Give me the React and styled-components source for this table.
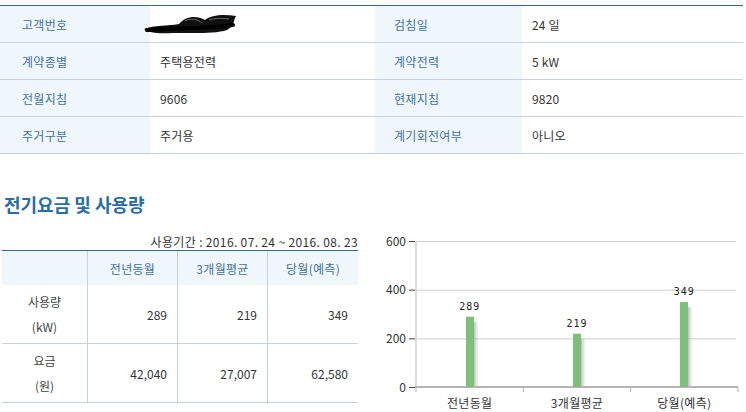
import React from "react";
import styled, { createGlobalStyle } from "styled-components";

const GlobalStyle = createGlobalStyle`
  html, body { margin: 0; padding: 0; background: #ffffff; }
  body { font-family: "Noto Sans CJK KR", "Noto Sans", sans-serif; color: #333; }
`;

const Page = styled.div`
  width: 746px;
  height: 412px;
  overflow: hidden;
  padding-top: 5px;
  box-sizing: border-box;
`;

const InfoGrid = styled.div`
  display: grid;
  grid-template-columns: 150px 225px 147px 221px;
  width: 743px;
  border-top: 1px solid #3b6b7c;
`;

const InfoLabel = styled.div`
  height: 36px;
  display: flex;
  align-items: center;
  padding-left: ${(p) => (p.$first ? "22px" : "19px")};
  background: #f0f7fc;
  color: #41729f;
  font-size: 12px;
  letter-spacing: 0.3px;
  border-bottom: 1px solid #c6d1d9;
`;

const InfoValue = styled.div`
  height: 36px;
  display: flex;
  align-items: center;
  padding-left: 10px;
  color: #333;
  font-size: 12px;
  letter-spacing: 0.2px;
  border-bottom: 1px solid #c6d1d9;
`;

const Heading = styled.h2`
  margin: 39px 0 0 4px;
  height: 22px;
  line-height: 22px;
  font-size: 18px;
  font-weight: 700;
  color: #2a6ca3;
`;

const Section = styled.div`
  display: flex;
  align-items: flex-start;
  margin-top: 19px;
  padding-left: 2px;
`;

const UsageColumn = styled.div`
  width: 356px;
  display: flex;
  flex-direction: column;
`;

const Period = styled.div`
  height: 16px;
  line-height: 16px;
  font-size: 12px;
  letter-spacing: 0.35px;
  text-align: right;
  color: #333;
`;

const UsageGrid = styled.div`
  display: grid;
  grid-template-columns: 86px 90px 90px 90px;
  border-top: 1px solid #3b6b7c;
`;

const HeadCell = styled.div`
  height: 34px;
  box-sizing: border-box;
  display: flex;
  align-items: center;
  justify-content: center;
  background: #f0f7fc;
  color: #41729f;
  font-size: 12px;
  letter-spacing: 0.3px;
  border-right: ${(p) => (p.$last ? "none" : "1px solid #c6d1d9")};
`;

const RowHead = styled.div`
  height: 59px;
  box-sizing: border-box;
  display: flex;
  flex-direction: column;
  align-items: center;
  justify-content: center;
  font-size: 12px;
  line-height: 25px;
  color: #444;
  border-right: 1px solid #c6d1d9;
  border-bottom: 1px solid #c6d1d9;
`;

const NumCell = styled.div`
  height: 59px;
  box-sizing: border-box;
  display: flex;
  align-items: center;
  justify-content: flex-end;
  padding-right: 10px;
  font-size: 12px;
  color: #333;
  border-right: ${(p) => (p.$last ? "none" : "1px solid #c6d1d9")};
  border-bottom: 1px solid #c6d1d9;
`;

const ChartBox = styled.div`
  margin-left: 15px;
  margin-top: -8px;
  width: 373px;
  height: 186px;
`;

const Scribble = () => (
  <svg width="96" height="22" viewBox="0 0 96 22" style={{ marginLeft: -17 }}>
    <path
      d="M1 16 C 12 12, 24 13, 36 11 C 42 3, 54 2, 62 7 C 68 2, 80 1, 93 3 C 90 8, 92 12, 84 17 C 72 21, 50 20, 30 20 C 16 21, 6 20, 1 16 Z"
      fill="#111"
    />
    <path d="M4 17 C 30 15, 60 16, 90 12" stroke="#000" strokeWidth="4" fill="none" strokeLinecap="round" />
    <path d="M42 8 C 48 5, 55 6, 59 10" stroke="#fff" strokeWidth="1" fill="none" opacity="0.35" />
    <path d="M66 7 C 72 5, 79 5, 86 6" stroke="#fff" strokeWidth="1" fill="none" opacity="0.35" />
  </svg>
);

const info = [
  ["고객번호", null, "검침일", "24 일"],
  ["계약종별", "주택용전력", "계약전력", "5 kW"],
  ["전월지침", "9606", "현재지침", "9820"],
  ["주거구분", "주거용", "계기회전여부", "아니오"],
];

const cats = ["전년동월", "3개월평균", "당월(예측)"];
const usage = [289, 219, 349];
const fees = ["42,040", "27,007", "62,580"];

const Chart = () => {
  const off = 8;
  const left = 43;
  const right = 365;
  const top = 7 + off;
  const bottom = 153 + off;
  const scale = (bottom - top) / 600;
  const y = (v) => bottom - v * scale;
  const catW = (right - left) / 3;
  return (
    <svg width="373" height="186" viewBox="0 0 373 186">
      <defs>
        <linearGradient id="shadow" x1="0" x2="1" y1="0" y2="0">
          <stop offset="0" stopColor="#888" stopOpacity="0.7" />
          <stop offset="1" stopColor="#bbb" stopOpacity="0" />
        </linearGradient>
      </defs>
      {[600, 400, 200].map((v) => (
        <line key={v} x1={left} x2={right - 2} y1={y(v) + 0.5} y2={y(v) + 0.5} stroke="#cfcfcf" strokeWidth="1" />
      ))}
      <line x1={left} x2={left} y1={top} y2={bottom} stroke="#dcdcdc" strokeWidth="2" />
      <line x1={left - 1} x2={right} y1={bottom} y2={bottom} stroke="#b5b5b5" strokeWidth="2" />
      {[0, 1, 2, 3].map((i) => (
        <line key={i} x1={left + catW * i} x2={left + catW * i} y1={bottom} y2={bottom + 5} stroke="#b5b5b5" strokeWidth="1" />
      ))}
      {[600, 400, 200, 0].map((v) => (
        <g key={v}>
          <line x1={36} x2={42} y1={y(v) + 0.5} y2={y(v) + 0.5} stroke="#444" strokeWidth="1" />
          <text x={33} y={y(v) + 4.5} textAnchor="end" fontSize="12" fill="#333" fontFamily="'Noto Sans CJK KR', sans-serif">
            {v}
          </text>
        </g>
      ))}
      {usage.map((v, i) => {
        const cx = left + catW * (i + 0.5);
        const bx = Math.round(cx - 4);
        const by = y(v);
        return (
          <g key={i}>
            <rect x={bx + 7} y={by + 5} width={6} height={bottom - by - 6} fill="url(#shadow)" />
            <rect x={bx} y={by} width={8} height={bottom - by} fill="#7fbf7b" />
            <text x={cx} y={by - 7} textAnchor="middle" fontSize="10" letterSpacing="1" fill="#222" fontFamily="'DejaVu Sans Mono', monospace">
              {v}
            </text>
            <text x={cx} y={174 + off} textAnchor="middle" fontSize="12" letterSpacing="0.3" fill="#333" fontFamily="'Noto Sans CJK KR', sans-serif">
              {cats[i]}
            </text>
          </g>
        );
      })}
    </svg>
  );
};

export default function App() {
  return (
    <Page>
      <GlobalStyle />
      <InfoGrid>
        {info.map((r, i) => (
          <React.Fragment key={i}>
            <InfoLabel $first>{r[0]}</InfoLabel>
            <InfoValue>{r[1] === null ? <Scribble /> : r[1]}</InfoValue>
            <InfoLabel>{r[2]}</InfoLabel>
            <InfoValue>{r[3]}</InfoValue>
          </React.Fragment>
        ))}
      </InfoGrid>
      <Heading>전기요금 및 사용량</Heading>
      <Section>
        <UsageColumn>
          <Period>사용기간 : 2016. 07. 24 ~ 2016. 08. 23</Period>
          <UsageGrid>
            <HeadCell />
            {cats.map((c, i) => (
              <HeadCell key={c} $last={i === 2}>{c}</HeadCell>
            ))}
            <RowHead>
              <span>사용량</span>
              <span>(kW)</span>
            </RowHead>
            {usage.map((v, i) => (
              <NumCell key={i} $last={i === 2}>{v}</NumCell>
            ))}
            <RowHead>
              <span>요금</span>
              <span>(원)</span>
            </RowHead>
            {fees.map((v, i) => (
              <NumCell key={i} $last={i === 2}>{v}</NumCell>
            ))}
          </UsageGrid>
        </UsageColumn>
        <ChartBox>
          <Chart />
        </ChartBox>
      </Section>
    </Page>
  );
}
